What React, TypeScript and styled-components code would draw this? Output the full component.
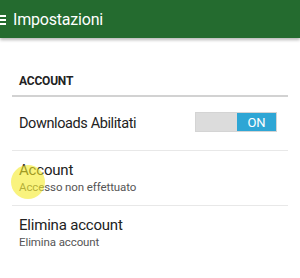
import styled, { createGlobalStyle } from "styled-components";

const Global = createGlobalStyle`
  html, body {
    margin: 0;
    padding: 0;
    background: #fff;
    font-family: Roboto, "Liberation Sans", sans-serif;
  }
`

export default function App() {
    return <Page>
        <Global/>
        <Header>
            <Burger>
                <span/><span/><span/>
            </Burger>
            <Title>Impostazioni</Title>
        </Header>

        <Content>
            <SectionTitle>ACCOUNT</SectionTitle>

            <SwitchRow>
                <RowLabel $compact>Downloads Abilitati</RowLabel>
                <Toggle>
                    <ToggleHalf/>
                    <ToggleHalf $on>ON</ToggleHalf>
                </Toggle>
            </SwitchRow>

            <ItemRow>
                <RowLabel>Account</RowLabel>
                <RowSub>Accesso non effettuato</RowSub>
                <TouchDot/>
            </ItemRow>

            <ItemRow $last>
                <RowLabel>Elimina account</RowLabel>
                <RowSub>Elimina account</RowSub>
            </ItemRow>
        </Content>
    </Page>
}

const Page = styled.div`
  width: 300px;
  height: 278px;
  overflow: hidden;
  position: relative;
`

const Header = styled.div`
  height: 38px;
  display: flex;
  align-items: center;
  gap: 7px;
  background: #246b2f;
  box-shadow: 0 2px 3px rgba(0, 0, 0, 0.28);
  position: relative;
  z-index: 1;
`

const Burger = styled.div`
  display: flex;
  flex-direction: column;
  gap: 2px;
  margin-left: -1px;
  margin-top: 1px;

  span {
    display: block;
    width: 7px;
    height: 2px;
    background: #fff;
  }
`

const Title = styled.h1`
  margin: 0;
  font-size: 16px;
  font-weight: 400;
  letter-spacing: -0.2px;
  color: #fff;
`

const Content = styled.div`
  padding: 0 12px;
`

const SectionTitle = styled.div`
  padding: 36px 0 7px 7px;
  font-size: 12px;
  font-weight: 700;
  letter-spacing: -0.2px;
  color: #222;
  border-bottom: 2px solid #d2d2d2;
`

const SwitchRow = styled.div`
  height: 53px;
  padding-left: 7px;
  display: flex;
  align-items: center;
  justify-content: space-between;
  border-bottom: 1px solid #e8e8e8;
`

const RowLabel = styled.div<{ $compact?: boolean }>`
  font-size: ${({$compact}) => $compact ? "14.5px" : "15px"};
  letter-spacing: ${({$compact}) => $compact ? "-0.4px" : "-0.2px"};
  color: #222;
  line-height: 19px;
`

const RowSub = styled.div`
  font-size: 11.5px;
  letter-spacing: -0.1px;
  color: #555;
  line-height: 15px;
`

const Toggle = styled.div`
  display: flex;
  width: 82px;
  height: 20px;
  margin-right: 11px;
  margin-top: -3px;
  border: 1px solid #d4d4d4;
  box-sizing: border-box;
`

const ToggleHalf = styled.div<{ $on?: boolean }>`
  flex: ${({$on}) => $on ? "0 0 39px" : "1"};
  background: ${({$on}) => $on ? "#2ea6d5" : "#dcdcdc"};
  color: #fff;
  font-size: 13px;
  display: flex;
  align-items: center;
  justify-content: center;
`

const ItemRow = styled.div<{ $last?: boolean }>`
  position: relative;
  padding: 10px 0 10px 7px;
  border-bottom: ${({$last}) => $last ? "none" : "1px solid #e8e8e8"};
`

const TouchDot = styled.div`
  position: absolute;
  left: -1px;
  top: 14px;
  width: 34px;
  height: 34px;
  border-radius: 50%;
  background: rgba(245, 235, 40, 0.6);
`
